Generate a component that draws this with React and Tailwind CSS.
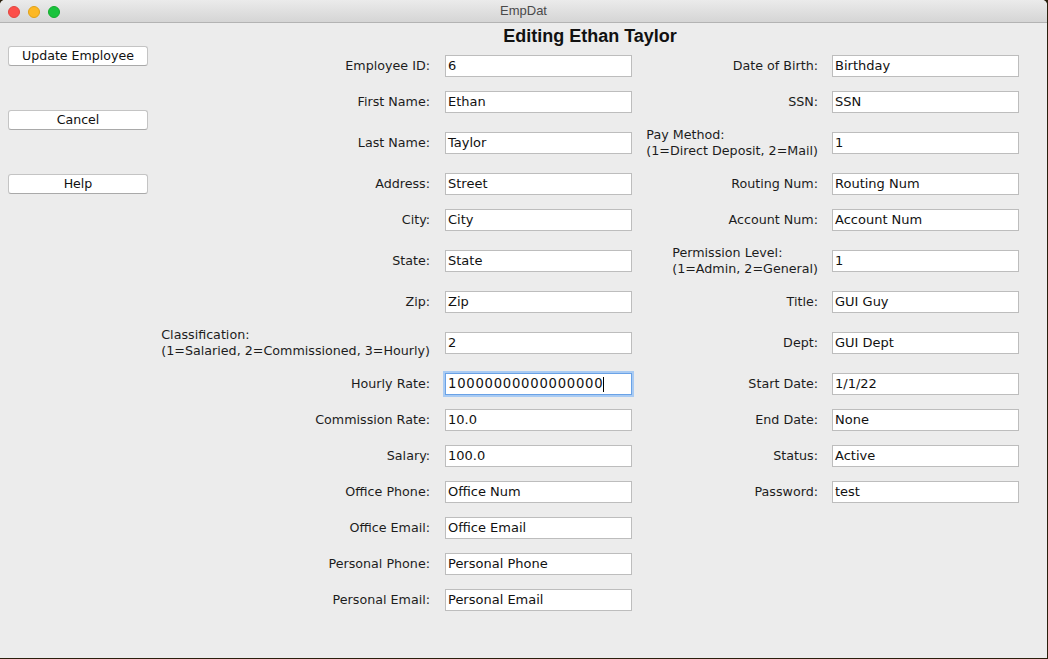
import React from "react";

const font = { fontFamily: '"DejaVu Sans", Verdana, sans-serif' };
const headFont = { fontFamily: '"Liberation Sans", Arial, sans-serif' };

const rows = [
  { h: "h-[36px]", l1: ["Employee ID:"], v1: "6", l2: ["Date of Birth:"], v2: "Birthday" },
  { h: "h-[36px]", l1: ["First Name:"], v1: "Ethan", l2: ["SSN:"], v2: "SSN" },
  { h: "h-[46px]", l1: ["Last Name:"], v1: "Taylor", l2: ["Pay Method:", "(1=Direct Deposit, 2=Mail)"], v2: "1" },
  { h: "h-[36px]", l1: ["Address:"], v1: "Street", l2: ["Routing Num:"], v2: "Routing Num" },
  { h: "h-[36px]", l1: ["City:"], v1: "City", l2: ["Account Num:"], v2: "Account Num" },
  { h: "h-[46px]", l1: ["State:"], v1: "State", l2: ["Permission Level:", "(1=Admin, 2=General)"], v2: "1" },
  { h: "h-[36px]", l1: ["Zip:"], v1: "Zip", l2: ["Title:"], v2: "GUI Guy" },
  { h: "h-[46px]", l1: ["Classification:", "(1=Salaried, 2=Commissioned, 3=Hourly)"], v1: "2", l2: ["Dept:"], v2: "GUI Dept" },
  { h: "h-[36px]", l1: ["Hourly Rate:"], v1: "10000000000000000", focus: true, l2: ["Start Date:"], v2: "1/1/22" },
  { h: "h-[36px]", l1: ["Commission Rate:"], v1: "10.0", l2: ["End Date:"], v2: "None" },
  { h: "h-[36px]", l1: ["Salary:"], v1: "100.0", l2: ["Status:"], v2: "Active" },
  { h: "h-[36px]", l1: ["Office Phone:"], v1: "Office Num", l2: ["Password:"], v2: "test" },
  { h: "h-[36px]", l1: ["Office Email:"], v1: "Office Email" },
  { h: "h-[36px]", l1: ["Personal Phone:"], v1: "Personal Phone" },
  { h: "h-[36px]", l1: ["Personal Email:"], v1: "Personal Email" },
];

function Label({ lines, w }) {
  return (
    <div className={`${w} flex justify-end items-center`}>
      <div className="text-left text-[12.7px] leading-[16px] text-[#1c1c1c]">
        {lines.map((t) => (
          <div key={t} className="whitespace-pre">{t}</div>
        ))}
      </div>
    </div>
  );
}

function Field({ value, focus, w }) {
  if (focus) {
    return (
      <div className={`${w} h-[22px] bg-white border border-[#6aa2e6] shadow-[0_0_0_2px_#a9cbf3] flex items-center pl-[2px] text-[13.2px] text-[#111]`}>
        <span className="whitespace-pre tracking-[0.75px]">{value}</span>
        <span className="w-px h-[15px] bg-black" />
      </div>
    );
  }
  return (
    <div className={`${w} h-[22px] bg-white border border-[#bdbdbd] flex items-center pl-[2px] text-[13px] text-[#111] whitespace-pre`}>
      {value}
    </div>
  );
}

function Btn({ children }) {
  return (
    <div className="w-[140px] h-[20px] bg-white border border-[#c4c4c4] border-b-[#a9a9a9] rounded-[3px] flex items-center justify-center text-[12.6px] text-[#111]">
      {children}
    </div>
  );
}

export default function App() {
  return (
    <div className="w-[1048px] h-[659px] bg-[#2a1f0c] overflow-hidden" style={font}>
      <div className="w-[1047px] h-[658px] bg-[#ececec] rounded-t-[5px] overflow-hidden flex flex-col">
        <div className="h-[23px] shrink-0 bg-gradient-to-b from-[#ebebeb] to-[#d5d5d5] border-b border-[#b3b3b3] relative flex items-center justify-center">
          <div className="absolute left-[8px] top-[6px] flex gap-[8px]">
            <div className="w-[12px] h-[12px] rounded-full bg-[#fc4f4a] border border-[#e2463f]" />
            <div className="w-[12px] h-[12px] rounded-full bg-[#fdb824] border border-[#e1a116]" />
            <div className="w-[12px] h-[12px] rounded-full bg-[#19c33c] border border-[#14ab2e]" />
          </div>
          <span className="text-[13px] text-[#4a4a4a]" style={headFont}>EmpDat</span>
        </div>
        <div className="flex flex-1">
          <div className="pl-[8px] pt-[23px] flex flex-col gap-[44px]">
            <Btn>Update Employee</Btn>
            <Btn>Cancel</Btn>
            <Btn>Help</Btn>
          </div>
          <div className="ml-[14px] flex flex-col">
            <div className="h-[25px] pt-[1px] flex items-center justify-center w-[856px]">
              <span className="text-[18px] leading-[22px] font-bold text-[#111]" style={headFont}>Editing Ethan Taylor</span>
            </div>
            {rows.map((r, i) => (
              <div key={i} className={`${r.h} flex items-center`}>
                <Label lines={r.l1} w="w-[268px]" />
                <div className="w-[15px]" />
                <Field value={r.v1} focus={r.focus} w="w-[187px]" />
                {r.l2 && (
                  <>
                    <div className="w-[14px]" />
                    <Label lines={r.l2} w="w-[172px]" />
                    <div className="w-[14px]" />
                    <Field value={r.v2} w="w-[187px]" />
                  </>
                )}
              </div>
            ))}
          </div>
        </div>
      </div>
    </div>
  );
}
